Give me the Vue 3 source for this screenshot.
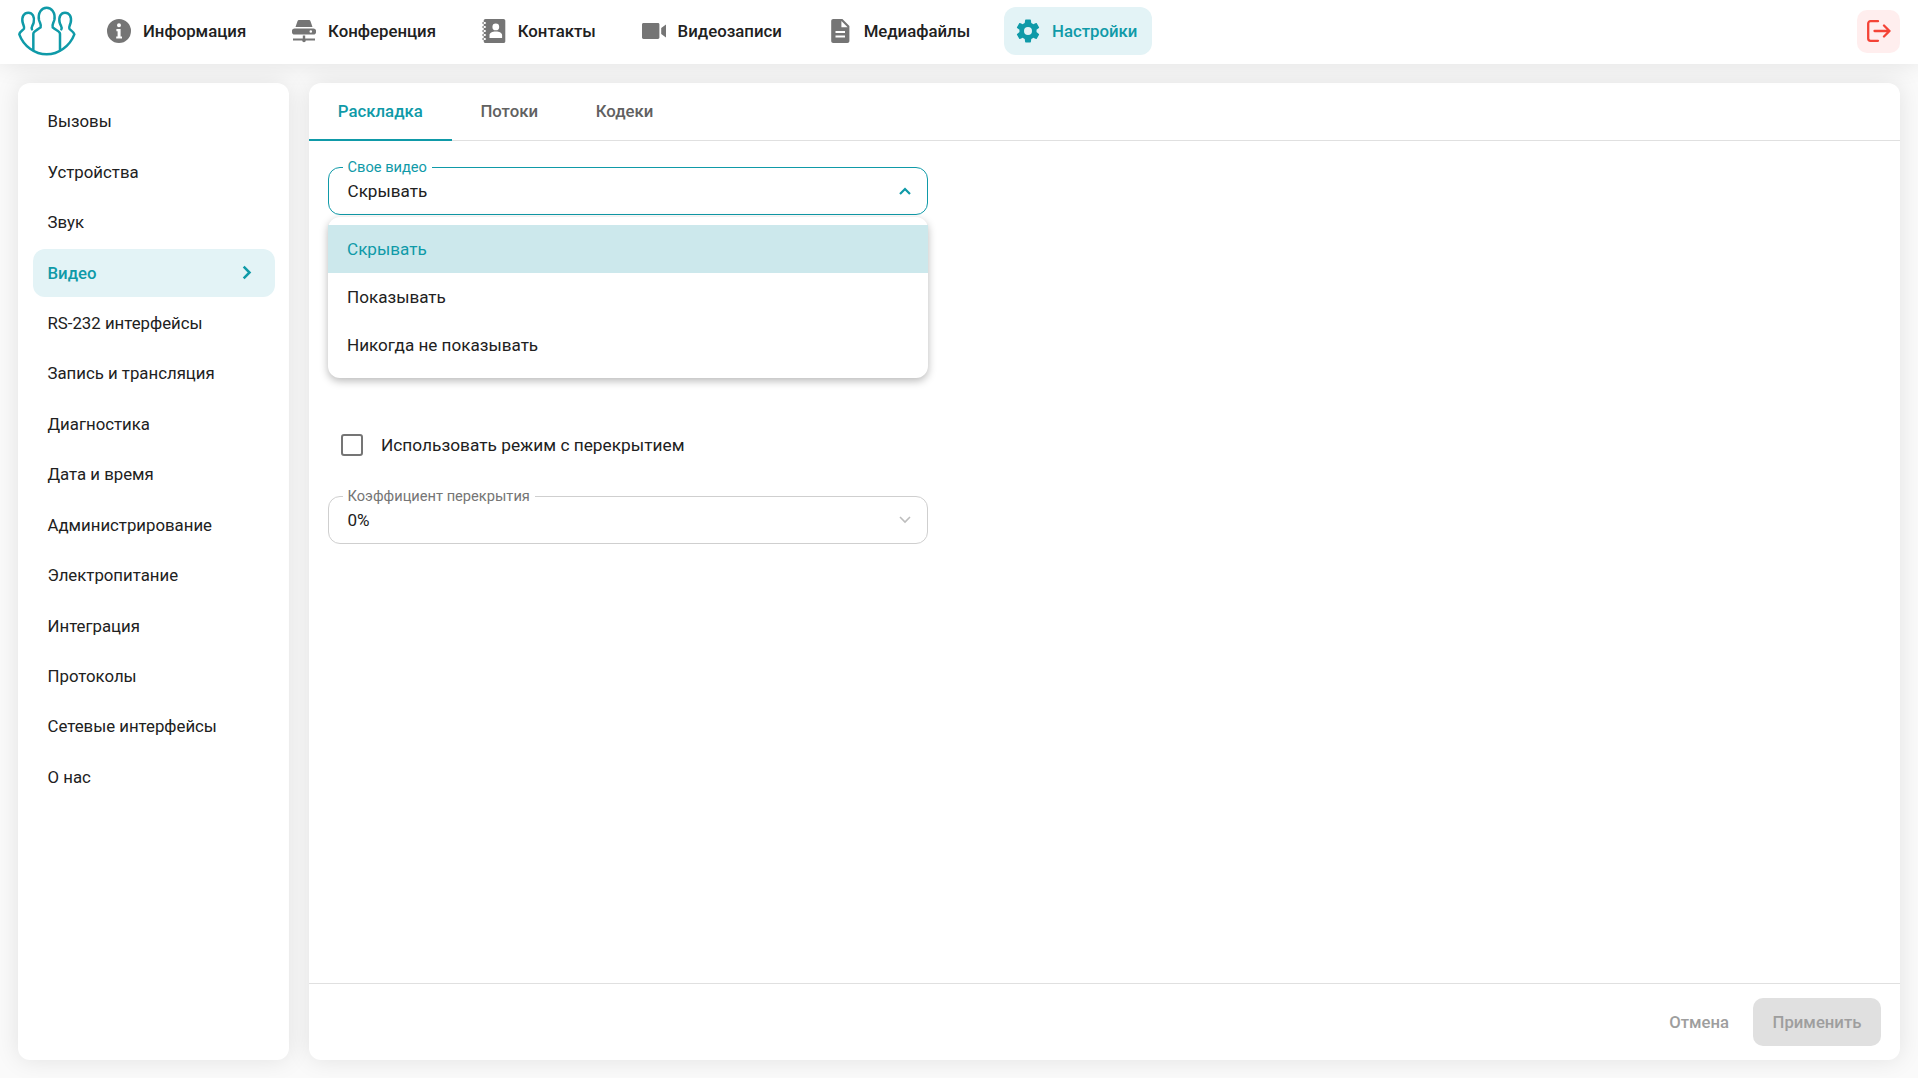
<template>
  <div class="app">
    <header class="topbar">
      <svg class="logo" viewBox="25 20 172 150" fill="none" stroke="#0f9aa8" stroke-width="7.500" stroke-linecap="round" stroke-linejoin="round">
        <path d="M70 152V103C70 96 82 92 92 84C95 78 90 72 87 62C83 40 95 25 110 25C125 25 137 40 133 62C130 72 125 78 128 84C136 92 150 96 150 103V152" />
        <path d="M66 90C62 84 68 80 71 70C75 52 67 40 55 40C42 40 34 52 38 70C41 80 44 84 42 88C38 94 30 96 28 105C40 140 75 165 110 165C145 165 180 140 193 105C190 96 182 94 178 88C176 84 179 80 182 70C186 52 178 40 165 40C153 40 145 52 149 70C152 80 158 84 154 90" />
      </svg>

      <nav class="nav">
        <a v-for="item in navItems" :key="item.label" class="nav-item" :class="{ active: item.active }">
          <svg v-if="item.icon === 'info'" class="nav-icon" viewBox="0 0 24 24">
            <path fill-rule="evenodd" d="M12 0a12 12 0 1 0 0 24a12 12 0 0 0 0-24zM12 4.200a2 2 0 1 1 0 4a2 2 0 0 1 0-4zM9.400 10h4.200v7.400h1.400v2.200H9.200v-2.200h1.400v-5.200H9.400z" />
          </svg>
          <svg v-else-if="item.icon === 'conf'" class="nav-icon" viewBox="0 0 24 24">
            <path fill-rule="evenodd" d="M3.500 8L5.400 2.400C5.700 1.500 6.500 1 7.300 1h9.400c.8 0 1.600.5 1.900 1.400L20.500 8zM2.500 9.500h19c1.300 0 2.500 1 2.500 2.100v1.800c0 1.200-1.200 2.100-2.500 2.100h-19C1.200 15.500 0 14.600 0 13.400v-1.800C0 10.500 1.200 9.500 2.500 9.500zM18.800 11.200a1.300 1.300 0 1 0 0 2.600a1.300 1.300 0 0 0 0-2.600zM10.800 16.500h2.400v3h9.800v2h-9.200a1.800 1.800 0 0 1-3.600 0H1v-2h9.800z" />
          </svg>
          <svg v-else-if="item.icon === 'contacts'" class="nav-icon" viewBox="0 0 24 24">
            <path fill-rule="evenodd" d="M3.500 0h18c1 0 1.800.8 1.800 1.800v20.400c0 1-.8 1.800-1.800 1.800h-18c-1 0-1.800-.8-1.800-1.800V21h-1.200v-2h1.200v-2h-1.200v-2h1.200v-2h-1.200v-2h1.200V9h-1.200V7h1.200V5h-1.200V3h1.200V1.800C1.700.8 2.500 0 3.500 0zM13.800 4.500a3.400 3.400 0 1 0 0 6.800a3.400 3.400 0 0 0 0-6.800zM7.500 19h12.600v-2.800c0-2-2.600-3.600-6.300-3.600s-6.300 1.600-6.300 3.600z" />
            <path fill="#fff" d="M1.700 3h2v2h-2zM1.700 7h2v2h-2zM1.700 11h2v2h-2zM1.700 15h2v2h-2zM1.700 19h2v2h-2z" />
          </svg>
          <svg v-else-if="item.icon === 'video'" class="nav-icon" viewBox="0 0 24 24">
            <path d="M1.500 4h14.500c.8 0 1.400.6 1.400 1.400v13.200c0 .8-.6 1.400-1.400 1.400H1.500C.7 20 0 19.400 0 18.600V5.400C0 4.600.7 4 1.500 4zM24 5.500v13l-4.800-3.400V8.900z" />
          </svg>
          <svg v-else-if="item.icon === 'file'" class="nav-icon" viewBox="0 0 24 24">
            <path fill-rule="evenodd" d="M5.200 0h9.200l7 7v15c0 1.100-.9 2-2 2H5.200c-1.100 0-2-.9-2-2V2c0-1.100.9-2 2-2zM13.400 2v6.200h6.200zM7.500 12v2h9.500v-2zM7.500 16.500v2h9.500v-2z" />
          </svg>
          <svg v-else class="nav-icon" viewBox="1.500 1.500 21 21">
            <path d="M12,15.500A3.500,3.500 0 0,1 8.500,12A3.500,3.500 0 0,1 12,8.500A3.500,3.500 0 0,1 15.500,12A3.500,3.500 0 0,1 12,15.500M19.430,12.970C19.470,12.650 19.500,12.330 19.500,12C19.500,11.670 19.470,11.340 19.430,11L21.540,9.370C21.730,9.220 21.780,8.950 21.660,8.730L19.660,5.270C19.540,5.050 19.270,4.960 19.050,5.050L16.560,6.050C16.040,5.660 15.500,5.320 14.870,5.070L14.500,2.420C14.460,2.180 14.250,2 14,2H10C9.750,2 9.540,2.180 9.500,2.420L9.130,5.070C8.500,5.320 7.960,5.660 7.440,6.050L4.950,5.050C4.730,4.960 4.460,5.050 4.340,5.270L2.340,8.730C2.210,8.950 2.270,9.220 2.460,9.370L4.570,11C4.530,11.340 4.500,11.670 4.500,12C4.500,12.330 4.530,12.650 4.570,12.970L2.460,14.630C2.270,14.780 2.210,15.050 2.340,15.270L4.340,18.730C4.460,18.950 4.730,19.030 4.950,18.950L7.440,17.940C7.960,18.340 8.500,18.680 9.130,18.930L9.500,21.580C9.540,21.820 9.750,22 10,22H14C14.250,22 14.460,21.820 14.500,21.580L14.870,18.930C15.500,18.670 16.040,18.340 16.560,17.940L19.050,18.950C19.270,19.030 19.540,18.950 19.660,18.730L21.660,15.270C21.780,15.050 21.730,14.780 21.540,14.630L19.430,12.970Z" />
          </svg>
          <span>{{ item.label }}</span>
        </a>
      </nav>

      <button class="logout">
        <svg viewBox="0 0 24 22" width="24" height="22" fill="none" stroke="#f44336" stroke-width="2.300" stroke-linecap="round" stroke-linejoin="round">
          <path d="M11 1.200H3.500C2.300 1.200 1.200 2.200 1.200 3.500v15c0 1.300 1.100 2.300 2.300 2.300H11" />
          <path d="M7.500 11h15M17 5.500l5.500 5.500l-5.500 5.500" />
        </svg>
      </button>
    </header>

    <main class="content">
      <aside class="sidebar">
        <a v-for="item in sideItems" :key="item" class="side-item" :class="{ active: item === 'Видео' }">
          <span>{{ item }}</span>
          <svg v-if="item === 'Видео'" viewBox="0 0 12 18" width="10" height="15" fill="none" stroke="#0f9aa8" stroke-width="3">
            <path d="M2 2l7 7l-7 7" />
          </svg>
        </a>
      </aside>

      <section class="panel">
        <div class="tabs">
          <a v-for="tab in tabs" :key="tab" class="tab" :class="{ active: tab === 'Раскладка' }">{{ tab }}</a>
        </div>

        <div class="form">
          <div class="select focused">
            <label class="select-label">Свое видео</label>
            <span>Скрывать</span>
            <svg viewBox="0 0 12 8" width="12" height="8" fill="none" stroke="#0f9aa8" stroke-width="2.200">
              <path d="M1 7l5-5l5 5" />
            </svg>
            <ul class="dropdown">
              <li v-for="opt in options" :key="opt" :class="{ selected: opt === 'Скрывать' }">{{ opt }}</li>
            </ul>
          </div>

          <label class="check-row">
            <span class="checkbox"></span>
            <span>Использовать режим с перекрытием</span>
          </label>

          <div class="select">
            <label class="select-label">Коэффициент перекрытия</label>
            <span>0%</span>
            <svg viewBox="0 0 12 8" width="12" height="8" fill="none" stroke="#bdbdbd" stroke-width="1.600">
              <path d="M1 1l5 5l5-5" />
            </svg>
          </div>
        </div>

        <footer class="panel-footer">
          <button class="btn-cancel">Отмена</button>
          <button class="btn-apply">Применить</button>
        </footer>
      </section>
    </main>
  </div>
</template>

<script setup>
const navItems = [
  { label: 'Информация', icon: 'info' },
  { label: 'Конференция', icon: 'conf' },
  { label: 'Контакты', icon: 'contacts' },
  { label: 'Видеозаписи', icon: 'video' },
  { label: 'Медиафайлы', icon: 'file' },
  { label: 'Настройки', icon: 'gear', active: true }
]

const sideItems = [
  'Вызовы',
  'Устройства',
  'Звук',
  'Видео',
  'RS-232 интерфейсы',
  'Запись и трансляция',
  'Диагностика',
  'Дата и время',
  'Администрирование',
  'Электропитание',
  'Интеграция',
  'Протоколы',
  'Сетевые интерфейсы',
  'О нас'
]

const tabs = ['Раскладка', 'Потоки', 'Кодеки']
const options = ['Скрывать', 'Показывать', 'Никогда не показывать']
</script>

<style>
html, body {
  height: 100%;
  margin: 0;
  overflow: hidden;
  background: #fafafa;
}
</style>

<style scoped>
.app {
  display: flex;
  flex-direction: column;
  height: 1078px;
  font-family: Roboto, "Noto Sans", sans-serif;
  font-size: 16.800px;
  color: #212121;
}

.topbar {
  display: flex;
  align-items: center;
  height: 64px;
  padding: 0 18px 2px;
  box-sizing: border-box;
  background: #fff;
  box-shadow: 0 0 24px rgba(0, 0, 0, 0.1);
  position: relative;
  flex-shrink: 0;
}

.logo {
  width: 58px;
  height: 50px;
  margin-right: 19px;
}

.nav {
  display: flex;
  gap: 18.800px;
  flex: 1;
}

.nav-item {
  display: flex;
  align-items: center;
  gap: 12px;
  height: 48px;
  padding: 0 15px 0 12px;
  border-radius: 12px;
  font-weight: 500;
}

.nav-icon {
  width: 24px;
  height: 24px;
  fill: #757575;
}

.nav-item.active {
  background: #e3f3f6;
  color: #0f9aa8;
}

.nav-item.active .nav-icon {
  fill: #0f9aa8;
}

.logout {
  display: flex;
  align-items: center;
  justify-content: center;
  width: 43px;
  height: 43px;
  padding: 0;
  border: none;
  border-radius: 10px;
  background: #ffeeee;
}

.content {
  flex: 1;
  display: flex;
  gap: 20px;
  padding: 19px 18px 18px;
  min-height: 0;
}

.sidebar {
  width: 271px;
  flex-shrink: 0;
  box-sizing: border-box;
  padding: 14.300px 14px 14px 15px;
  background: #fff;
  border-radius: 12px;
  box-shadow: 0 0 24px rgba(0, 0, 0, 0.1);
}

.side-item {
  display: flex;
  align-items: center;
  justify-content: space-between;
  height: 48px;
  margin-bottom: 2.430px;
  padding: 0 23px 0 14.500px;
  border-radius: 12px;
}

.side-item.active {
  background: #e3f3f6;
  color: #0f9aa8;
  font-weight: 500;
}

.panel {
  flex: 1;
  display: flex;
  flex-direction: column;
  background: #fff;
  border-radius: 12px;
  box-shadow: 0 0 24px rgba(0, 0, 0, 0.1);
  min-width: 0;
}

.tabs {
  display: flex;
  height: 58px;
  box-sizing: border-box;
  border-bottom: 1px solid #e0e0e0;
  flex-shrink: 0;
}

.tab {
  display: flex;
  align-items: center;
  height: 58px;
  box-sizing: border-box;
  padding: 0 28.800px 2px;
  color: #616161;
  font-weight: 500;
}

.tab.active {
  color: #0f9aa8;
  padding-bottom: 0;
  border-bottom: 2px solid #0f9aa8;
}

.form {
  flex: 1;
  width: 600px;
  padding: 26px 0 0 19px;
  font-size: 17.100px;
}

.select {
  position: relative;
  display: flex;
  align-items: center;
  justify-content: space-between;
  height: 48px;
  box-sizing: border-box;
  padding: 0 16px 0 18.500px;
  border: 1px solid #cfcfcf;
  border-radius: 12px;
}

.select.focused {
  border-color: #0f9aa8;
}

.select-label {
  position: absolute;
  left: 13.500px;
  top: -9px;
  padding: 0 5px;
  background: #fff;
  font-size: 14.650px;
  line-height: 17px;
  color: #757575;
}

.focused .select-label {
  color: #0f9aa8;
}

.dropdown {
  position: absolute;
  left: -1px;
  right: -1px;
  top: 49px;
  margin: 0;
  padding: 8px 0 9px;
  list-style: none;
  background: #fff;
  border-radius: 12px;
  box-shadow: 0 3px 8px rgba(0, 0, 0, 0.28);
}

.dropdown li {
  display: flex;
  align-items: center;
  height: 48px;
  padding-left: 19px;
}

.dropdown li.selected {
  background: #cce8ec;
  color: #0f9aa8;
}

.check-row {
  display: flex;
  align-items: center;
  gap: 18px;
  height: 24px;
  margin: 218px 0 39px 13px;
  font-size: 17.300px;
}

.checkbox {
  width: 22px;
  height: 22px;
  box-sizing: border-box;
  border: 2px solid #757575;
  border-radius: 3px;
}

.panel-footer {
  display: flex;
  justify-content: flex-end;
  align-items: center;
  gap: 12px;
  height: 77px;
  box-sizing: border-box;
  padding: 0 19px;
  border-top: 1px solid #e0e0e0;
}

.btn-cancel,
.btn-apply {
  height: 48px;
  border: none;
  border-radius: 10px;
  font-family: inherit;
  font-size: 16.700px;
  font-weight: 500;
  color: #9e9e9e;
}

.btn-cancel {
  padding: 0 12px;
  background: transparent;
}

.btn-apply {
  width: 128px;
  background: #e0e0e0;
}
</style>
